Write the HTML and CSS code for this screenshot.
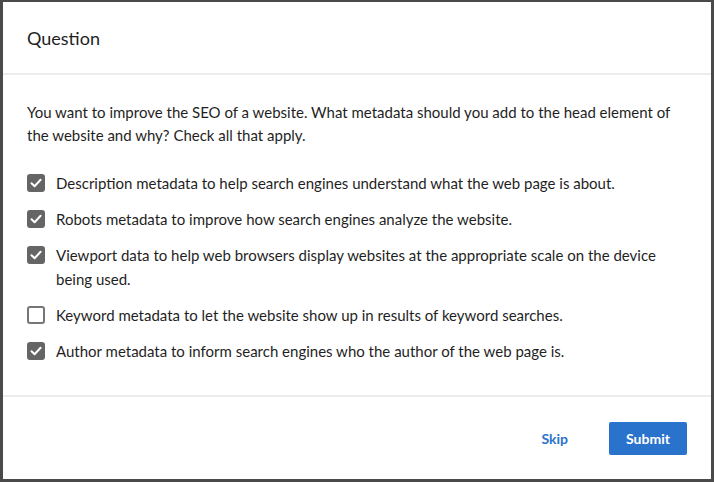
FILE: index.html
```html
<!DOCTYPE html>
<html>
<head>
<meta charset="utf-8">
<link rel="stylesheet" href="styles.css">
</head>
<body>
<div class="dialog">
  <div class="header"><h1 class="title">Question</h1></div>
  <div class="content">
    <p class="prompt">You want to improve the SEO of a website. What metadata should you add to the head element of the website and why? Check all that apply.</p>
    <ul class="options">
      <li class="option"><span class="box checked"><svg viewBox="0 0 18 18" width="18" height="18"><path d="M4.5 9.3 L7.6 12.3 L13.6 5.8" fill="none" stroke="#fff" stroke-width="2" stroke-linecap="round" stroke-linejoin="round"/></svg></span><span class="label">Description metadata to help search engines understand what the web page is about.</span></li>
      <li class="option"><span class="box checked"><svg viewBox="0 0 18 18" width="18" height="18"><path d="M4.5 9.3 L7.6 12.3 L13.6 5.8" fill="none" stroke="#fff" stroke-width="2" stroke-linecap="round" stroke-linejoin="round"/></svg></span><span class="label">Robots metadata to improve how search engines analyze the website.</span></li>
      <li class="option"><span class="box checked"><svg viewBox="0 0 18 18" width="18" height="18"><path d="M4.5 9.3 L7.6 12.3 L13.6 5.8" fill="none" stroke="#fff" stroke-width="2" stroke-linecap="round" stroke-linejoin="round"/></svg></span><span class="label">Viewport data to help web browsers display websites at the appropriate scale on the device being used.</span></li>
      <li class="option"><span class="box"></span><span class="label">Keyword metadata to let the website show up in results of keyword searches.</span></li>
      <li class="option"><span class="box checked"><svg viewBox="0 0 18 18" width="18" height="18"><path d="M4.5 9.3 L7.6 12.3 L13.6 5.8" fill="none" stroke="#fff" stroke-width="2" stroke-linecap="round" stroke-linejoin="round"/></svg></span><span class="label">Author metadata to inform search engines who the author of the web page is.</span></li>
    </ul>
  </div>
  <div class="footer">
    <button class="btn-skip">Skip</button>
    <button class="btn-submit">Submit</button>
  </div>
</div>
</body>
</html>
```
FILE: styles.css
```css
html, body {
  margin: 0;
  padding: 0;
  background: #fff;
}
.dialog {
  box-sizing: border-box;
  width: 714px;
  height: 482px;
  border-style: solid;
  border-color: #4a4a4a;
  border-width: 2px 3px 3px 3px;
  display: flex;
  flex-direction: column;
  font-family: "Lato", "Noto Sans", sans-serif;
  color: #1f1f1f;
  background: #fff;
}
.header {
  height: 71px;
  border-bottom: 2px solid #ececec;
  display: flex;
  align-items: center;
  padding: 0 24px;
}
.title {
  margin: 0;
  font-size: 18px;
  font-weight: 400;
  line-height: 24px;
  padding-top: 1px;
}
.content {
  padding: 26px 24px 32px 24px;
  border-bottom: 2px solid #ececec;
}
.prompt {
  margin: 0 0 24px 0;
  font-size: 15px;
  line-height: 23px;
}
.options {
  list-style: none;
  margin: 0;
  padding: 0;
  display: flex;
  flex-direction: column;
  gap: 12px;
}
.option {
  display: flex;
  align-items: flex-start;
  font-size: 15px;
  line-height: 24px;
}
.box {
  flex: none;
  box-sizing: border-box;
  width: 18px;
  height: 18px;
  margin-top: 3px;
  margin-right: 11px;
  border: 2px solid #767676;
  border-radius: 3px;
  background: #fff;
  position: relative;
}
.box.checked {
  background: #656565;
  border-color: #656565;
}
.box svg {
  position: absolute;
  left: -2px;
  top: -2px;
}
.footer {
  flex: 1;
  display: flex;
  align-items: center;
  justify-content: flex-end;
  padding: 0 24px;
  gap: 24px;
}
.btn-skip, .btn-submit {
  font-family: "Lato", "Noto Sans", sans-serif;
  font-size: 14px;
  font-weight: 700;
  border: none;
  cursor: pointer;
}
.btn-skip {
  background: none;
  color: #2a73cc;
  padding: 0 17px 0 15px;
  height: 33px;
}
.btn-submit {
  background: #2a73cc;
  color: #fff;
  width: 78px;
  height: 33px;
  border-radius: 2px;
}
```
